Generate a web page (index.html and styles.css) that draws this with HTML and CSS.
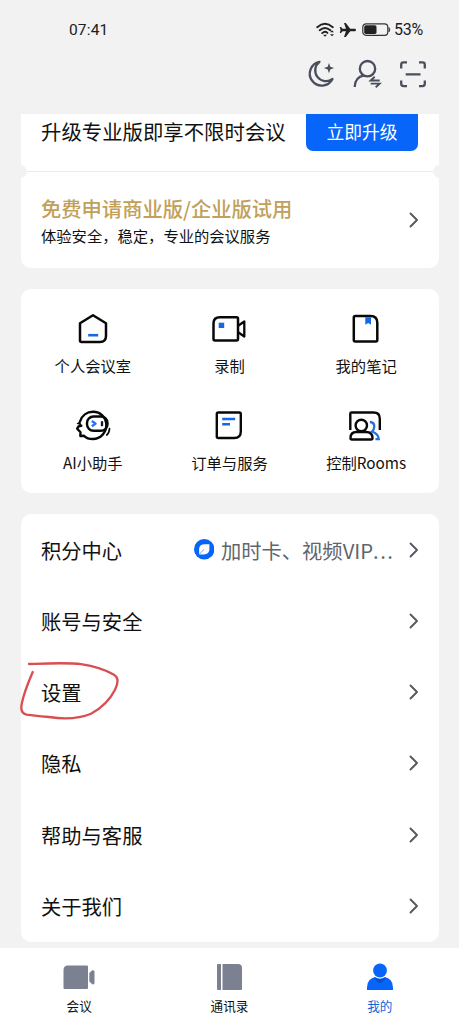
FILE: index.html
```html
<!DOCTYPE html>
<html lang="zh-CN">
<head>
<meta charset="utf-8">
<title>我的</title>
<link rel="stylesheet" href="styles.css">
</head>
<body>
<svg class="defs" width="0" height="0"><defs>
<symbol id="chevron" viewBox="0 0 10 16"><path d="M1.500 1.500 8 8l-6.500 6.500" fill="none" stroke="#55585f" stroke-width="1.900" stroke-linecap="round" stroke-linejoin="round"/></symbol>
</defs></svg>
<div class="screen">
<header class="status">
  <span class="time">07:41</span>
  <div class="status-right">
    <svg class="wifi" viewBox="0 0 20 16"><g fill="none" stroke="#222" stroke-width="1.900" stroke-linecap="round"><path d="M1.200 5.200Q9 -1.700 16.800 5.200M3.700 8.200q5.300-4.600 10.600 0M6.200 11.100q2.800-2.400 5.200-.2"/></g><path d="M7 12.700h4L9 14.800zM14 10.200l2-2 2 2zM14 12.200l2 2 2-2z" fill="#222"/></svg>
    <svg class="plane" viewBox="0 0 18 16"><path d="M17 8c0-.9-.7-1.300-1.600-1.300h-4.200L6.800 1H5l2 5.700H3.500L2 4.900H.7L1.600 8l-.9 3.100H2l1.500-1.800H7L5 15h1.800l4.400-5.700h4.200C16.300 9.300 17 8.900 17 8z" fill="#222"/></svg>
    <svg class="battery" viewBox="0 0 29 14"><rect x=".8" y=".8" width="25" height="11.600" rx="3.300" fill="none" stroke="#333" stroke-width="1.200"/><rect x="2.200" y="2.300" width="12.300" height="8.600" rx="1.700" fill="#222"/><path d="M27 4.500q1.500 2 0 4.400z" fill="#333" stroke="#333" stroke-width=".7"/></svg>
    <span class="percent">53%</span>
  </div>
</header>
<div class="toolbar">
  <svg viewBox="0 0 30 30"><path d="M13.500 2.800A12 12 0 1 0 26.500 20 9.800 9.800 0 0 1 13.500 2.800z" fill="none" stroke="#484e5b" stroke-width="2.300" stroke-linejoin="round"/><path d="M23 4l1.300 3.800 3.800 1.300-3.800 1.300L23 14.200l-1.300-3.800-3.800-1.300 3.800-1.300z" fill="#484e5b"/></svg>
  <svg viewBox="0 0 30 30"><g fill="none" stroke="#484e5b" stroke-width="2.300"><circle cx="15.500" cy="9.700" r="7.700"/><path d="M2.700 28c.2-6.500 3.600-10.500 9.300-11.600"/><path d="M27.700 21.500h-9l4-3.700M18.700 24.600h9l-4 3.700" stroke-width="1.900"/></g></svg>
  <svg viewBox="0 0 30 30"><path d="M3.200 9.500V5.700q0-2.300 2.300-2.300H9M21 3.400h3.500q2.300 0 2.300 2.300v3.800M26.800 21.500v3.300q0 2.300-2.300 2.300H21M9 27.100H5.500q-2.300 0-2.300-2.300v-3.300M7.700 15.300h14.800" fill="none" stroke="#484e5b" stroke-width="2.300"/></svg>
</div>
<main class="content">
  <section class="card promo">
    <div class="upgrade"><span>升级专业版即享不限时会议</span><button class="upgrade-btn">立即升级</button></div>
    <div class="divider"></div>
    <div class="trial">
      <div><div class="trial-title">免费申请商业版/企业版试用</div><div class="trial-sub">体验安全，稳定，专业的会议服务</div></div>
      <svg class="chevron"><use href="#chevron"/></svg>
    </div>
  </section>
  <section class="card grid">
    <div class="tile"><svg viewBox="0 0 36 36"><path d="M5 12.300 18 4.300l13 8V25q0 6-6 6H6.500Q5 31 5 29.500z" fill="none" stroke="#080808" stroke-width="2.500" stroke-linejoin="round"/><path d="M13.200 24.200h10" stroke="#1268e8" stroke-width="2.600"/></svg><span>个人会议室</span></div>
    <div class="tile"><svg viewBox="0 0 36 36"><path d="M9 6.300h16.500q1.500 0 1.500 1.500V28q0 1.500-1.500 1.500H4q-1.500 0-1.500-1.500V12.300q0-6 6.500-6z" fill="none" stroke="#080808" stroke-width="2.500"/><path d="M27.500 14.500l5.800-4v15l-5.800-4" fill="none" stroke="#080808" stroke-width="2.300" stroke-linejoin="round"/><path d="M7.700 11.700h5.500V17H7.700z" fill="#1268e8"/></svg><span>录制</span></div>
    <div class="tile"><svg viewBox="0 0 36 36"><path d="M7.300 5H22.500Q29.300 5 29.300 11.800V29q0 1.500-1.500 1.500H7.300Q5.800 30.500 5.800 29V6.500Q5.800 5 7.300 5z" fill="none" stroke="#080808" stroke-width="2.500"/><path d="M17.300 6.200H23v7.600L20.200 12l-2.900 1.800z" fill="#1268e8"/></svg><span>我的笔记</span></div>
    <div class="tile"><svg viewBox="0 0 36 36"><g fill="none" stroke="#080808" stroke-width="2.400" stroke-linecap="round" stroke-linejoin="round"><path d="M5 13.500C6.800 7.500 12 3.800 18 3.800c7.500 0 13.300 5.700 13.300 13.300S25.500 31 18 31c-3.800 0-6.800-1-9-3.200L5.300 28l.2-3.700L2.200 20.800c.5-2 1.900-3 4.100-3.100"/><rect x="12" y="8.500" width="20.500" height="14.300" rx="6.500"/></g><path d="M5 13l-3.500 2.700 5 1.800z" fill="#080808"/><path d="M34.500 20.500q-.2 4.500-2.700 6.500" fill="none" stroke="#080808" stroke-width="1.700" stroke-linecap="round"/><path d="M16.800 13l3.800 2.600-3.800 2.700" fill="none" stroke="#2372f0" stroke-width="2.300" stroke-linejoin="round"/><path d="M27 13.200v5" stroke="#121923" stroke-width="2.300"/></svg><span>AI小助手</span></div>
    <div class="tile"><svg viewBox="0 0 36 36"><path d="M7.300 4.500h21q1.500 0 1.500 1.500v17.500q0 6.500-6.500 6.500h-16q-1.500 0-1.500-1.500V6q0-1.500 1.500-1.500z" fill="none" stroke="#080808" stroke-width="2.400"/><path d="M11.200 11h13M11.200 16.300H19" stroke="#1268e8" stroke-width="2.400"/></svg><span>订单与服务</span></div>
    <div class="tile"><svg viewBox="0 0 36 36"><g fill="none" stroke="#080808" stroke-width="2.400"><path d="M2.300 22V5.700q0-1.200 1.200-1.200H25.600q6.200 0 6.200 6.200V22"/><circle cx="13.300" cy="17.500" r="5.700"/><path d="M2.500 30q0-6 6-6h9.500q6.500 0 6.500 6 0 1.500-1.500 1.500H4Q2.500 31.500 2.500 30z"/></g><path d="M21.800 14q4.500.3 4.500 4.500 0 3-2.300 5 6.500 2.500 6.800 7.700H27.500" fill="none" stroke="#2372df" stroke-width="2.300"/></svg><span>控制Rooms</span></div>
  </section>
  <section class="card list">
    <div class="row"><span>积分中心</span><div class="extra"><svg class="badge" viewBox="0 0 20 20"><circle cx="10" cy="10" r="10" fill="#0765fa"/><path d="M5 15V9.800Q5 5 10.500 5H15v5q0 5-5.300 5z" fill="#fff"/><path d="M5 15.300L9.700 10" stroke="#5b93ef" stroke-width=".8"/></svg><span>加时卡、视频VIP<span class="dots">...</span></span></div><svg class="chevron"><use href="#chevron"/></svg></div>
    <div class="row"><span>账号与安全</span><svg class="chevron"><use href="#chevron"/></svg></div>
    <div class="row"><span>设置</span><svg class="chevron"><use href="#chevron"/></svg>
      <svg class="marker" viewBox="0 0 104 64"><path d="M9 6C24 5.500 48 4.300 61 6.200c13 2 26 6.500 33 10.500 5 3 4 9 1 15-5 10-13 18-24 24-12 5-27 5.500-42 3.300C17 58 12 57.200 6.500 56.700 1.500 55.500 .7 51 1.700 46 3.500 36 8 25 12.700 14" fill="none" stroke="#da4d50" stroke-width="2.300" stroke-linecap="round" stroke-linejoin="round"/></svg></div>
    <div class="row"><span>隐私</span><svg class="chevron"><use href="#chevron"/></svg></div>
    <div class="row"><span>帮助与客服</span><svg class="chevron"><use href="#chevron"/></svg></div>
    <div class="row"><span>关于我们</span><svg class="chevron"><use href="#chevron"/></svg></div>
  </section>
</main>
<nav class="tabs">
  <div class="tab"><svg viewBox="0 0 34 30"><path d="M6 3.500H25q1 0 1 1V26q0 1-1 1H2.500q-1 0-1-1V8q0-4.500 4.500-4.500zM27.300 11l3-2.700q2.200-.5 2.200 1.500v11q0 2-2.200 1.500l-3-2.700z" fill="#7b8190"/></svg><span>会议</span></div>
  <div class="tab"><svg viewBox="0 0 34 30"><path d="M6 2h3v26H6q-1 0-1-1V3q0-1 1-1zM10.500 2H26q4 0 4 4v21q0 1-1 1H10.500z" fill="#7b8190"/></svg><span>通讯录</span></div>
  <div class="tab active"><svg viewBox="0 0 34 30"><path d="M4 28v-2.500Q4 16 13.500 15h7Q30 16 30 25.500V28z" fill="#0765fa"/><path d="M10.500 15.500h13l-4.500 5q-2 1-4 0z" fill="#0551d1"/><circle cx="17" cy="8.500" r="8.200" fill="#fff"/><circle cx="17" cy="8.500" r="6.900" fill="#0765fa"/></svg><span>我的</span></div>
</nav>
</div>
</body>
</html>
```

FILE: styles.css
```css
* { box-sizing: border-box; }
body { margin: 0; background: #f2f2f2; color: #111; font-family: "Noto Sans CJK SC", sans-serif; }
.defs { display: block; }
.screen { width: 459px; height: 1024px; display: flex; flex-direction: column; overflow: hidden; }
.status { height: 59px; flex: none; padding: 0 32px 0 69px; display: flex; align-items: center; justify-content: space-between; font-family: Roboto, sans-serif; font-size: 15.5px; color: #202020; }
.time { font-size: 15.5px; letter-spacing: .15px; }
.status-right { display: flex; align-items: center; }
.wifi { width: 20px; height: 16px; margin-right: 3px; }
.plane { width: 18px; height: 16px; margin-right: 5px; }
.battery { width: 29px; height: 14px; margin-right: 3px; }
.percent { width: 33px; font-size: 16px; letter-spacing: -.2px; }
.toolbar { height: 55px; flex: none; display: flex; justify-content: flex-end; gap: 16px; padding: 0 31px 0 0; }
.toolbar svg { width: 30px; height: 30px; }
.content { flex: 1; min-height: 0; padding: 0 20.5px; display: flex; flex-direction: column; gap: 21px; }
.card { flex: none; background: #fff; border-radius: 10px; }
.promo { height: 154px; border-radius: 0 0 10px 10px; overflow: hidden; }
.upgrade { height: 57px; padding: 0 20.5px; display: flex; align-items: flex-start; justify-content: space-between; font-size: 20.4px; line-height: 35px; white-space: nowrap; }
.upgrade-btn { width: 112px; height: 37px; padding: 0 0 2px; border: 0; border-radius: 0 0 7px 7px; background: #0765fa; color: #fff; font: 17.8px/33px "Noto Sans CJK SC", sans-serif; }
.divider { height: 1px; background: #ebebeb; display: flex; align-items: center; justify-content: space-between; }
.divider::before, .divider::after { content: ""; flex: none; width: 13px; height: 13px; border-radius: 50%; background: #f2f2f2; }
.divider::before { margin-left: -7px; }
.divider::after { margin-right: -7px; }
.trial { height: 96px; padding: 0 20px 0 20.5px; display: flex; align-items: center; justify-content: space-between; }
.trial-title { color: #c1a05a; font-size: 20.3px; line-height: 30px; font-weight: 500; }
.trial-sub { font-size: 15.3px; line-height: 24px; }
.chevron { flex: none; width: 10px; height: 16px; }
.grid { height: 204px; padding: 22px 4px 0; display: grid; grid-template-columns: repeat(3, 1fr); grid-template-rows: 97px 97px; }
.tile { display: flex; flex-direction: column; align-items: center; font-size: 15.3px; line-height: 24px; gap: 6px; white-space: nowrap; }
.tile svg { width: 36px; height: 36px; }
.list { height: 427.5px; display: grid; grid-template-rows: repeat(6, 71.25px); }
.row { position: relative; padding: 0 20px 0 20.5px; display: flex; align-items: center; justify-content: space-between; font-size: 20.3px; line-height: 30px; }
.extra { margin-left: auto; margin-right: 14px; display: flex; align-items: center; gap: 6.5px; color: #61656d; }
.badge { width: 20.5px; height: 20.5px; }
.dots { letter-spacing: 1.5px; }
.marker { position: absolute; left: -1px; top: 1px; width: 104px; height: 64px; }
.tabs { flex: none; height: 76.5px; background: #fff; padding: 0 4px; display: grid; grid-template-columns: repeat(3, 1fr); }
.tab { display: flex; flex-direction: column; align-items: center; gap: 4px; padding-top: 14px; font-size: 12.6px; line-height: 20px; }
.tab svg { width: 34px; height: 30px; }
.tab.active { color: #1467d8; }
```
